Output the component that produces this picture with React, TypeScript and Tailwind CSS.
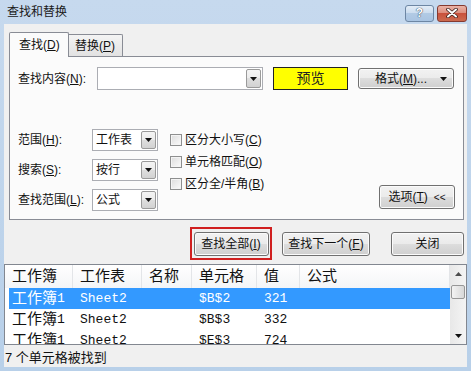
import React from 'react';

const btn =
  'flex items-center justify-center rounded-[3px] border border-[#707070] bg-[linear-gradient(#f2f2f2_0%,#ebebeb_49%,#dddddd_50%,#cfcfcf_100%)] shadow-[inset_0_0_0_1px_#fbfbfb] text-[12px] text-[#111]';

const Arrow = ({ className = '' }: { className?: string }) => (
  <svg width="7" height="4" viewBox="0 0 7 4" className={className}>
    <polygon points="0,0 7,0 3.5,4" fill="#111" />
  </svg>
);

const DropBtn = () => (
  <div className="ml-auto mr-px flex h-[calc(100%-2px)] w-[15px] items-center justify-center rounded-[2px] border border-[#9a9a9a] bg-[linear-gradient(#f4f4f4_0%,#ececec_49%,#dedede_50%,#d2d2d2_100%)]">
    <Arrow />
  </div>
);

const Select = ({ value }: { value: string }) => (
  <div className="flex h-[22px] w-[66px] items-center border border-[#abadb3] bg-white pl-[3px] text-[12px]">
    <span>{value}</span>
    <DropBtn />
  </div>
);

const Check = ({ label, k }: { label: string; k: string }) => (
  <div className="flex h-[22px] items-center gap-[3px] text-[12px]">
    <div className="h-[12px] w-[12px] border border-[#8e8f8f] bg-[linear-gradient(135deg,#dcdcdc,#fbfbfb)] shadow-[inset_0_0_0_1px_#f4f4f4]" />
    <span>
      {label}(<u>{k}</u>)
    </span>
  </div>
);

const CJK = /[\u4e00-\u9fff]/;

const Cell = ({ text }: { text: string }) => {
  const parts = text.match(/[\u4e00-\u9fff]+|[^\u4e00-\u9fff]+/g) || [];
  return (
    <>
      {parts.map((p, i) =>
        CJK.test(p) ? (
          <span key={i} className="text-[15px]">
            {p}
          </span>
        ) : (
          <span key={i} className="font-['Liberation_Mono',monospace] text-[13px]">
            {p}
          </span>
        )
      )}
    </>
  );
};

const COLS = ['w-[68px]', 'w-[69px]', 'w-[50px]', 'w-[65px]', 'w-[43px]', 'flex-1'];
const HEAD = ['工作簿', '工作表', '名称', '单元格', '值', '公式'];
const ROWS = [
  ['工作簿1', 'Sheet2', '', '$B$2', '321', ''],
  ['工作簿1', 'Sheet2', '', '$B$3', '332', ''],
  ['工作簿1', 'Sheet2', '', '$E$3', '724', ''],
];

export default function App() {
  return (
    <div className="flex h-[371px] w-[471px] flex-col overflow-hidden bg-linear-to-b from-[#c6d9ee] to-[#b8d0e9] px-[4px] pb-[4px] font-['Liberation_Sans','Noto_Sans_CJK_SC',sans-serif] text-[#111]">
      {/* title bar */}
      <div className="flex h-[27px] items-center pl-[3px]">
        <span className="text-[12px] text-[#1a1a1a]">查找和替换</span>
        <div className="ml-auto mt-[2px] flex gap-[3px]">
          <div className="flex h-[17px] w-[29px] items-center justify-center rounded-[3px] border border-[#6d86a3] bg-[linear-gradient(#e2ecf7_0%,#cbdcee_49%,#b2cae4_50%,#a9c4e2_100%)] text-[12px] font-bold text-white [text-shadow:0_0_1px_#2b3d55,0_0_1px_#2b3d55]">
            ?
          </div>
          <div className="flex h-[17px] w-[30px] items-center justify-center rounded-[3px] border border-[#853a30] bg-[linear-gradient(#eab3a7_0%,#dc8b7a_49%,#c9513c_50%,#cc6a4f_100%)]">
            <svg width="12" height="10" viewBox="0 0 12 10">
              <path d="M2 1.5 L10 8.5 M10 1.5 L2 8.5" stroke="#3a1e1a" strokeWidth="3.6" strokeLinecap="round" />
              <path d="M2 1.5 L10 8.5 M10 1.5 L2 8.5" stroke="#fff" strokeWidth="2" strokeLinecap="round" />
            </svg>
          </div>
        </div>
      </div>

      {/* body */}
      <div className="flex flex-1 flex-col bg-[#f0f0f0]">
        {/* tabs */}
        <div className="relative z-10 ml-[5px] mt-[8px] flex h-[24px] items-end">
          <div className="-mb-px flex h-[25px] w-[60px] items-center rounded-t-[2px] border border-b-0 border-[#898c95] bg-[#fbfbfb] pl-[9px] text-[12px]">
            查找(<u>D</u>)
          </div>
          <div className="flex h-[22px] w-[54px] items-center rounded-tr-[2px] border border-b-0 border-l-0 border-[#898c95] bg-linear-to-b from-[#f4f4f4] to-[#e2e2e2] pl-[6px] text-[12px]">
            替换(<u>P</u>)
          </div>
        </div>

        {/* tab page */}
        <div className="ml-[5px] h-[164px] w-[455px] border border-[#898c95] bg-[#fbfbfb] px-[8px] pt-[10px]">
          <div className="flex h-[23px] items-center">
            <span className="w-[79px] text-[12px]">
              查找内容(<u>N</u>):
            </span>
            <div className="flex h-[23px] w-[166px] items-center border border-[#abadb3] bg-white">
              <DropBtn />
            </div>
            <div className="ml-[10px] flex h-[23px] w-[75px] items-center justify-center border border-[#222] bg-[#ffff00] text-[14px] text-[#222]">
              预览
            </div>
            <div className={`${btn} relative ml-[10px] h-[21px] w-[96px]`}>
              <span className="mr-[10px]">
                格式(<u>M</u>)...
              </span>
              <Arrow className="absolute right-[6px] top-[8px]" />
            </div>
          </div>

          <div className="mt-[39px] flex">
            <div className="flex flex-col gap-[8px]">
              {[
                ['范围', 'H', '工作表'],
                ['搜索', 'S', '按行'],
                ['查找范围', 'L', '公式'],
              ].map(([l, k, v]) => (
                <div key={k} className="flex h-[22px] items-center">
                  <span className="w-[74px] text-[12px]">
                    {l}(<u>{k}</u>):
                  </span>
                  <Select value={v} />
                </div>
              ))}
            </div>
            <div className="ml-[12px] flex flex-col">
              <Check label="区分大小写" k="C" />
              <Check label="单元格匹配" k="O" />
              <Check label="区分全/半角" k="B" />
            </div>
            <div className={`${btn} mb-[2px] ml-auto h-[24px] w-[76px] self-end`}>
              选项(<u>T</u>)<span className="ml-[6px] text-[10px]">&lt;&lt;</span>
            </div>
          </div>
        </div>

        {/* action buttons */}
        <div className="mt-[7px] flex h-[33px] items-center">
          <div className="ml-[186px] flex h-[33px] w-[82px] items-center justify-center border-2 border-[#d01f1f]">
            <div className={`${btn} h-[24px] w-[75px]`}>
              查找全部(<u>I</u>)
            </div>
          </div>
          <div
            className={`${btn} ml-[10px] h-[24px] w-[88px] border-[#3c7fb1] shadow-[inset_0_0_0_1px_#8fd4f3,inset_0_0_0_2px_#d4eefa]`}
          >
            查找下一个(<u>F</u>)
          </div>
          <div className={`${btn} ml-[21px] h-[24px] w-[73px]`}>关闭</div>
        </div>

        {/* results list */}
        <div className="mt-[4px] flex h-[81px] border border-[#828790] bg-white">
          <div className="flex flex-1 flex-col overflow-hidden">
            <div className="flex h-[23px] shrink-0 bg-linear-to-b from-white to-[#f4f5f7]">
              {HEAD.map((h, i) => (
                <div
                  key={h}
                  className={`${COLS[i]} flex items-center border-r border-[#e3e5e8] pl-[7px] text-[15px]`}
                >
                  {h}
                </div>
              ))}
            </div>
            {ROWS.map((r, ri) => (
              <div
                key={ri}
                className={`ml-[4px] flex h-[21px] shrink-0 ${ri === 0 ? 'bg-[#3399ff] text-white' : ''}`}
              >
                {r.map((c, i) => (
                  <div
                    key={i}
                    className={`${i === 0 ? 'w-[64px] pl-[3px]' : `${COLS[i]} pl-[7px]`} flex items-center whitespace-nowrap`}
                  >
                    <Cell text={c} />
                  </div>
                ))}
              </div>
            ))}
          </div>
          <div className="flex w-[16px] flex-col bg-linear-to-r from-[#e8e8e8] to-[#f4f4f4]">
            <div className="flex h-[17px] items-center justify-center">
              <svg width="7" height="4" viewBox="0 0 7 4">
                <polygon points="0,4 7,4 3.5,0" fill="#4d4d4d" />
              </svg>
            </div>
            <div className="mx-px mt-[3px] h-[14px] rounded-[2px] border border-[#979797] bg-linear-to-r from-[#f3f3f3] to-[#d8d8d8]" />
            <div className="flex-1" />
            <div className="flex h-[17px] items-center justify-center">
              <Arrow />
            </div>
          </div>
        </div>

        {/* status */}
        <div className="flex-1 pl-[1px] pt-[4px] text-[13px] leading-[18px]">7 个单元格被找到</div>
      </div>
    </div>
  );
}
